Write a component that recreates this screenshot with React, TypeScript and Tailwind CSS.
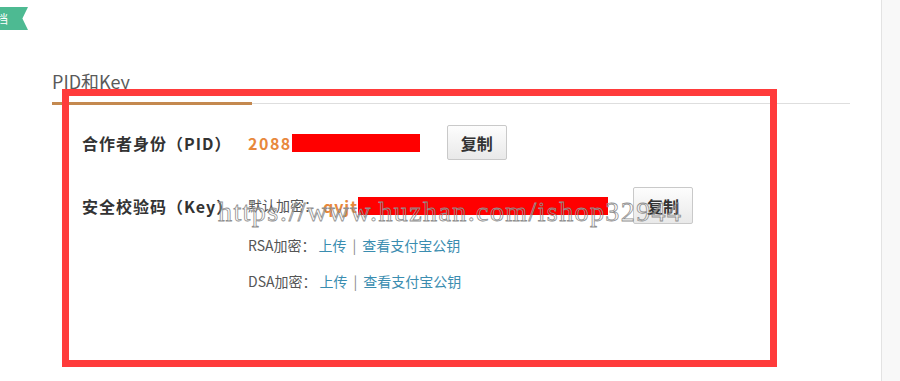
export default function App() {
    const font = { fontFamily: '"Noto Sans CJK SC", "Noto Sans", sans-serif' };

    return (
        <div className="flex h-[381px] w-[900px] overflow-hidden bg-white" style={font}>
            <div className="relative flex-1">
                {/* green ribbon tag, cut off at the left edge */}
                <div className="absolute left-0 top-[7px] flex h-[23px] w-[28px] items-center bg-[#4dba92] text-[12px] leading-none text-white [clip-path:polygon(0_0,100%_0,80%_50%,100%_100%,0_100%)]">
                    <span className="-ml-[4px]">档</span>
                </div>

                <div className="pl-[52px] pt-[69px]">
                    {/* tab header */}
                    <div className="w-[798px] border-b border-[#dedede]">
                        <div className="-mb-[2px] w-[200px] border-b-[3px] border-[#c4894f] pb-[9px] text-[18px] leading-[24px] text-[#5a5a5a]">
                            PID和Key
                        </div>
                    </div>

                    <div className="pl-[30px] pt-[21px]">
                        {/* PID row */}
                        <div className="flex items-center">
                            <div className="w-[166px] text-[16px] font-bold tracking-[1px] text-[#333]">合作者身份（PID）</div>
                            <span className="text-[16px] font-bold tracking-[1.5px] text-[#e8883c]">2088</span>
                            <span className="h-[18px] w-[128px] bg-[#ff0000]"></span>
                            <button className="ml-[27px] h-[35px] w-[60px] rounded-[2px] border border-[#c9c9c9] bg-gradient-to-b from-[#fdfdfd] to-[#e9e9e9] text-[16px] font-bold text-[#333]">
                                复制
                            </button>
                        </div>

                        {/* Key row */}
                        <div className="mt-[27px] flex items-center">
                            <div className="w-[166px] text-[16px] font-bold tracking-[1px] text-[#333]">安全校验码（Key）</div>
                            <span className="text-[14px] text-[#555]">默认加密：</span>
                            <span className="ml-[5px] text-[16px] font-bold tracking-[1px] text-[#e8883c]">qvjt</span>
                            <span className="h-[18px] w-[250px] bg-[#ff0000]"></span>
                            <button className="ml-[25px] h-[37px] w-[60px] rounded-[2px] border border-[#c9c9c9] bg-gradient-to-b from-[#fdfdfd] to-[#e9e9e9] text-[16px] font-bold text-[#333]">
                                复制
                            </button>
                        </div>

                        <div className="ml-[166px] mt-[11px] flex items-center text-[14px]">
                            <span className="text-[#555]">RSA加密：</span>
                            <span className="ml-[3px] text-[#3a8db0]">上传</span>
                            <span className="mx-[6px] text-[#888]">|</span>
                            <span className="text-[#3a8db0]">查看支付宝公钥</span>
                        </div>
                        <div className="ml-[166px] mt-[15px] flex items-center text-[14px]">
                            <span className="text-[#555]">DSA加密：</span>
                            <span className="ml-[3px] text-[#3a8db0]">上传</span>
                            <span className="mx-[6px] text-[#888]">|</span>
                            <span className="text-[#3a8db0]">查看支付宝公钥</span>
                        </div>
                    </div>
                </div>

                {/* red annotation frame drawn over the content */}
                <div className="pointer-events-none absolute left-[62px] top-[89px] h-[278px] w-[715px] border-[7px] border-[#ff3b3b]"></div>

                {/* watermark */}
                <div
                    className="pointer-events-none absolute left-[218px] top-[197px] text-[28px] leading-[30px] tracking-[1.4px] text-transparent [-webkit-text-stroke:0.8px_#8f8f8f]"
                    style={{ fontFamily: '"Liberation Serif", "DejaVu Serif", serif' }}
                >
                    https://www.huzhan.com/ishop32944
                </div>
            </div>

            {/* right edge panel */}
            <div className="w-[19px] border-l border-[#e3e3e3] bg-[#f8f8f8]"></div>
        </div>
    );
}
